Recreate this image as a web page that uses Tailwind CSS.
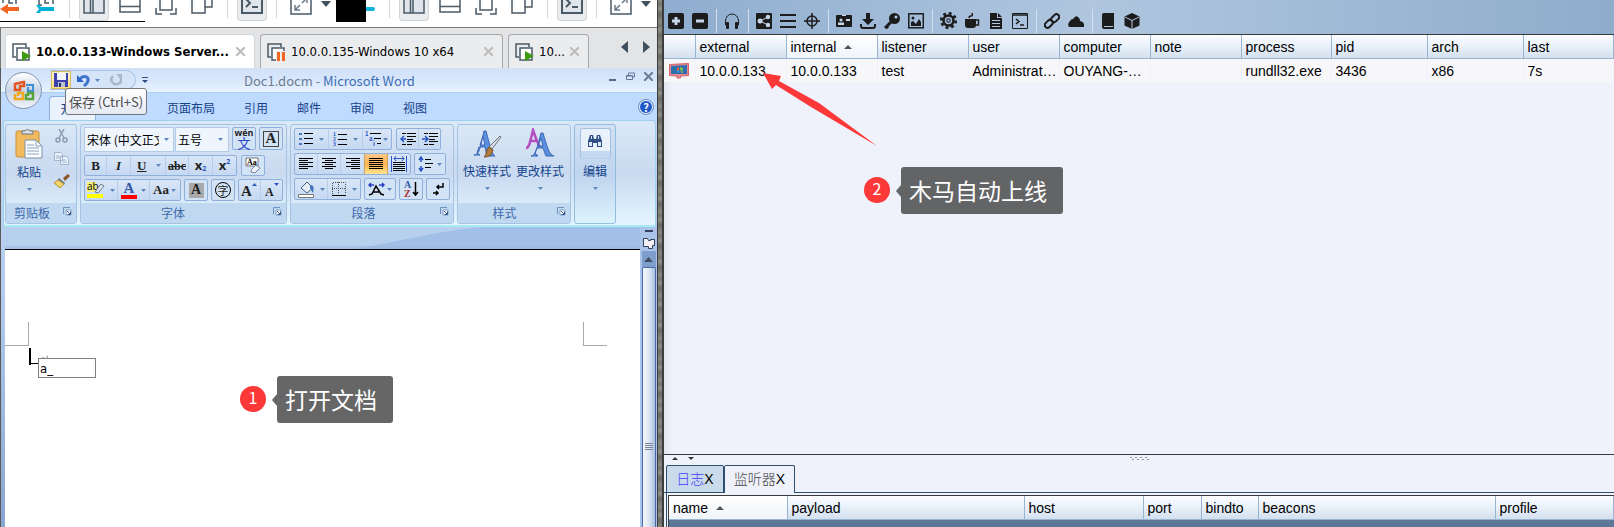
<!DOCTYPE html>
<html lang="zh-CN">
<head>
<meta charset="utf-8">
<title>Doc1.docm</title>
<script src="https://cdn.jsdelivr.net/npm/@tailwindcss/browser@4"></script>
</head>
<body class="relative flex h-screen overflow-hidden bg-[#eff2fb] font-['Liberation_Sans','Noto_Sans_CJK_SC',sans-serif] text-black">

<svg class="hidden">
  <symbol id="down" viewBox="0 0 5 3"><path d="M0 0h5L2.5 3z" fill="#5f86bd"/></symbol>
  <symbol id="sidebar" viewBox="0 0 22 22"><path d="M1 1h20v20H1zM7.500 1v20M10 1v20" fill="#dfe5ea" stroke="#4a5a67" stroke-width="1.500"/></symbol>
  <symbol id="bottom" viewBox="0 0 22 22"><path d="M1 1h20v18H1zM1 13.500h20" fill="none" stroke="#4a5a67" stroke-width="1.500"/></symbol>
  <symbol id="fit" viewBox="0 0 22 22"><path d="M5 1h12v16H5zM1 15v6h6M21 15v6h-6" fill="none" stroke="#4a5a67" stroke-width="1.500"/></symbol>
  <symbol id="copy" viewBox="0 0 22 22"><path d="M1 6h13v14H1zM8 6V1h13v13h-7" fill="none" stroke="#4a5a67" stroke-width="1.500"/></symbol>
  <symbol id="term" viewBox="0 0 22 22"><path d="M1 1h20v20H1z" fill="#dfe5ea" stroke="#4a5a67" stroke-width="2"/><path d="M5 7l4 4-4 4M11 15h6" fill="none" stroke="#4a5a67" stroke-width="2"/></symbol>
  <symbol id="expand" viewBox="0 0 22 22"><path d="M1 1h20v20H1z" fill="#fff" stroke="#4a5a67" stroke-width="1.500"/><path d="M5 12v5h5M5 17l5-5M17 10V5h-5M17 5l-5 5" fill="none" stroke="#6b7a86" stroke-width="1.500"/></symbol>
  <symbol id="vm" viewBox="0 0 18 18"><path d="M4 14H1V1h13v3" fill="none" stroke="#4a5a67" stroke-width="1.500"/><path d="M5 5h12v12H5z" fill="#fff" stroke="#4a5a67" stroke-width="1.500"/></symbol>
  <symbol id="launch" viewBox="0 0 9 9"><path d="M.5 7V.5H7" fill="none" stroke="#6d91c0"/><path d="M3 3h5v5H3z" fill="#fff" stroke="#7f9fc9"/><path d="M4 4l3 3M7.500 4.500v3h-3" stroke="#35588c" fill="none"/></symbol>
</svg>

<!-- Virtual machine window -->
<section class="relative flex min-w-0 flex-[657_1_0%] flex-col">
  <div class="relative flex h-[27px] shrink-0 items-start overflow-hidden bg-white">
    <div class="flex h-[22px] w-[69px] shrink-0 items-start justify-between border-b border-black pr-[13px]">
      <svg width="20" height="15" viewBox="0 0 20 15" fill="none"><path d="M3 0v3M16 0v4M9 0v3h4" stroke="#4a5a67" stroke-width="1.500"/><path d="M19 9H6" stroke="#f26522" stroke-width="4"/><path d="M8 4v10L0 9z" fill="#f26522"/></svg>
      <svg width="20" height="15" viewBox="0 0 20 15" fill="none"><path d="M3 0v5h3M17 0v4M9 0v3h4" stroke="#4a5a67" stroke-width="1.500"/><path d="M4 9h14" stroke="#00b0d8" stroke-width="4"/><path d="M0 5h4l2 4-2 4H0l3-4z" fill="#00b0d8"/></svg>
    </div>
    <div class="flex h-[22px] w-[267px] shrink-0 items-start">
      <div class="flex h-[22px] w-[76px] border-b border-black">
        <i class="h-[18px] w-px bg-gray-300"></i>
        <button aria-label="侧栏" class="ml-[9px] flex h-[21px] w-[30px] items-end justify-center rounded-b border border-t-0 border-gray-300 bg-[#e9ebed] pb-[6px]"><svg width="22" height="22" class="shrink-0"><use href="#sidebar"/></svg></button>
      </div>
      <div class="-ml-[33px] flex h-[15px] items-end">
        <button aria-label="缩略图栏" class="flex w-9 justify-center"><svg width="22" height="22"><use href="#bottom"/></svg></button>
        <button aria-label="全屏" class="flex w-9 justify-center"><svg width="22" height="22"><use href="#fit"/></svg></button>
        <button aria-label="Unity" class="flex w-9 justify-center"><svg width="22" height="22"><use href="#copy"/></svg></button>
      </div>
      <i class="ml-[7px] h-[18px] w-px bg-gray-300"></i>
      <button aria-label="控制台" class="ml-[9px] flex h-[21px] w-[30px] items-end justify-center rounded-b border border-t-0 border-gray-300 bg-[#e9ebed] pb-[6px]"><svg width="22" height="22" class="shrink-0"><use href="#term"/></svg></button>
      <i class="ml-[9px] h-[18px] w-px bg-gray-300"></i>
      <button aria-label="拉伸" class="ml-[13px] flex h-[15px] items-end"><svg width="22" height="22"><use href="#expand"/></svg></button>
      <svg class="mt-[1px] ml-[9px]" width="10" height="6"><path d="M0 0h10L5 6z" fill="#3f4f5c"/></svg>
    </div>
    <i class="h-[22px] w-[30px] shrink-0 bg-black"></i>
    <i class="mt-[7px] h-1 w-[9px] shrink-0 rounded-r bg-[#12b3dc]"></i>
    <div class="ml-[14px] flex h-[22px] w-[267px] shrink-0 items-start">
      <i class="h-[18px] w-px bg-gray-300"></i>
      <button aria-label="侧栏" class="ml-[9px] flex h-[21px] w-[30px] items-end justify-center rounded-b border border-t-0 border-gray-300 bg-[#e9ebed] pb-[6px]"><svg width="22" height="22" class="shrink-0"><use href="#sidebar"/></svg></button>
      <div class="ml-[3px] flex h-[15px] items-end">
        <button aria-label="缩略图栏" class="flex w-9 justify-center"><svg width="22" height="22"><use href="#bottom"/></svg></button>
        <button aria-label="全屏" class="flex w-9 justify-center"><svg width="22" height="22"><use href="#fit"/></svg></button>
        <button aria-label="Unity" class="flex w-9 justify-center"><svg width="22" height="22"><use href="#copy"/></svg></button>
      </div>
      <i class="ml-[7px] h-[18px] w-px bg-gray-300"></i>
      <button aria-label="控制台" class="ml-[9px] flex h-[21px] w-[30px] items-end justify-center rounded-b border border-t-0 border-gray-300 bg-[#e9ebed] pb-[6px]"><svg width="22" height="22" class="shrink-0"><use href="#term"/></svg></button>
      <i class="ml-[9px] h-[18px] w-px bg-gray-300"></i>
      <button aria-label="拉伸" class="ml-[13px] flex h-[15px] items-end"><svg width="22" height="22"><use href="#expand"/></svg></button>
      <svg class="mt-[1px] ml-[9px]" width="10" height="6"><path d="M0 0h10L5 6z" fill="#3f4f5c"/></svg>
    </div>
  </div>

  <nav class="flex h-[41px] shrink-0 items-end gap-[5px] border-t border-l border-[#7b7b7b] bg-[#e3e4e6] pl-1 font-['DejaVu_Sans_Condensed','DejaVu_Sans',sans-serif] text-[13px]">
    <div class="flex h-[34px] w-[250px] items-center rounded-t border border-b-0 border-gray-300 bg-white pl-[6px]">
      <svg width="19" height="18" viewBox="0 0 19 18"><use href="#vm" width="18" height="18"/><path d="M10 8l9 5-9 5z" fill="#3f9c12"/></svg>
      <a href="#" class="ml-[5px] flex-1 font-bold whitespace-nowrap">10.0.0.133-Windows Server...</a>
      <button aria-label="关闭" class="mr-[9px]"><svg width="9" height="9"><path d="M0 0l9 9M9 0L0 9" stroke="#bbb" stroke-width="2"/></svg></button>
    </div>
    <div class="flex h-[34px] w-[243px] items-center rounded-t border border-b-0 border-[#a8a8a8] bg-[#ebecee] pl-[6px]">
      <svg width="19" height="18" viewBox="0 0 19 18"><use href="#vm" width="18" height="18"/><path d="M9 8h10v10H9z" fill="#ebecee"/><path d="M10 9h3v9h-3zM15 9h3v9h-3z" fill="#f26522"/></svg>
      <a href="#" class="ml-[5px] flex-1 whitespace-nowrap">10.0.0.135-Windows 10 x64</a>
      <button aria-label="关闭" class="mr-[9px]"><svg width="9" height="9"><path d="M0 0l9 9M9 0L0 9" stroke="#bbb" stroke-width="2"/></svg></button>
    </div>
    <div class="flex h-[34px] w-[81px] items-center rounded-t border border-b-0 border-[#a8a8a8] bg-[#ebecee] pl-[6px]">
      <svg width="19" height="18" viewBox="0 0 19 18"><use href="#vm" width="18" height="18"/><path d="M10 8l9 5-9 5z" fill="#3f9c12"/></svg>
      <a href="#" class="ml-[5px] flex-1 whitespace-nowrap">10...</a>
      <button aria-label="关闭" class="mr-[9px]"><svg width="9" height="9"><path d="M0 0l9 9M9 0L0 9" stroke="#bbb" stroke-width="2"/></svg></button>
    </div>
    <div class="ml-auto flex h-[34px] items-start gap-[15px] pt-[7px] pr-[7px]">
      <button aria-label="向左"><svg width="7" height="12"><path d="M7 0v12L0 6z" fill="#3f4f5c"/></svg></button>
      <button aria-label="向右"><svg width="7" height="12"><path d="M0 0v12l7-6z" fill="#3f4f5c"/></svg></button>
    </div>
  </nav>

  <!-- Word -->
  <div class="relative flex min-h-0 flex-1 flex-col border-l border-[#5a5a5a] bg-linear-to-b from-[#c9dcf5] via-[#b3ccec] to-[#86a5d1] font-['Noto_Sans_CJK_SC',sans-serif] text-xs">
    <header class="flex h-[25px] shrink-0 items-center border-b border-[#a9d0f5] bg-linear-to-b from-[#cfe0f8] via-[#d8e7fb] to-[#e8f2ff] pl-[49px]">
      <div class="flex h-[20px] w-[86px] items-center rounded-r-full border border-l-0 border-[#a9c3e6] bg-[#d5e4f8] pl-px">
        <button aria-label="保存" class="flex h-[18px] w-[20px] items-center justify-center border border-[#d9b760] bg-linear-to-b from-[#fff6cf] to-[#ffe07a]"><svg width="14" height="14"><path d="M0 0h14v14H0z" fill="#3c3fae"/><path d="M3 0h9v7H3z" fill="#eef3fc"/><path d="M4 9h7v5H4z" fill="#b9c1cd"/><path d="M5 10h2v4H5z" fill="#28306b"/></svg></button>
        <button aria-label="撤消" class="ml-[6px]"><svg width="13" height="13" fill="none"><path d="M0 1v7h7z" fill="#2f66c4"/><path d="M3 5c3-4 9-3 8 2-1 3-3 4-4 5" stroke="#3f74cd" stroke-width="3"/></svg></button>
        <svg class="ml-[5px]" width="5" height="3"><use href="#down"/></svg>
        <button aria-label="恢复" class="ml-[10px]"><svg width="12" height="12" fill="none"><path d="M3 2c-4 4 0 9 4 8 4 0 6-5 2-8" stroke="#a9b8cd" stroke-width="2.500"/><path d="M6 0h6v5z" fill="#a9b8cd"/></svg></button>
      </div>
      <button aria-label="自定义" class="ml-[6px]"><svg width="6" height="6"><path d="M0 0h6v1H0zM0 3h6L3 6z" fill="#2d4e86"/></svg></button>
      <h1 class="flex-1 pt-[2px] pl-[96px] text-[13px] whitespace-nowrap text-[#3e6fb4]"><span class="text-[#6d7c92]">Doc1.docm - </span>Microsoft Word</h1>
      <div class="flex gap-[9px] self-start pt-[4px] pr-1">
        <button aria-label="最小化"><svg width="9" height="9"><path d="M1 7h7v2H1z" fill="#5a6a82"/></svg></button>
        <button aria-label="还原"><svg width="9" height="9" fill="none"><path d="M2.500 3V1h6v4H7" stroke="#62779b"/><path d="M.5 3.500h6v4h-6zM0 4h7" stroke="#62779b"/></svg></button>
        <button aria-label="关闭"><svg width="9" height="9"><path d="M0 0l9 9M9 0L0 9" stroke="#6b7c97" stroke-width="2"/></svg></button>
      </div>
    </header>

    <nav class="flex h-[27px] shrink-0 items-end bg-[#bfdbff] pl-12 text-[#15428b]">
      <a href="#" class="flex h-6 w-[47px] items-center justify-center rounded-t border border-b-0 border-[#8db2e3] bg-[#e9f2fd]">开始</a>
      <div class="ml-[18px] flex h-6 flex-1 items-center gap-[29px]">
        <a href="#">插入</a><a href="#">页面布局</a><a href="#">引用</a><a href="#">邮件</a><a href="#">审阅</a><a href="#">视图</a>
      </div>
      <button aria-label="帮助" class="mr-1 mb-[6px] flex size-[14px] items-center justify-center rounded-full border border-white bg-[#2059c8] text-[11px] font-bold text-white outline outline-[#6a8cc4]">?</button>
    </nav>

    <div class="mr-px ml-[2px] flex h-[107px] shrink-0 gap-[3px] rounded-[3px] border border-b-2 border-[#9fd0ee] border-b-[#a8eaf4] bg-linear-to-b from-[#dbe8f7] via-[#c9daf0] to-[#e4f5ff] px-px pt-[3px] pb-px text-[#15428b]">
      <!-- Clipboard -->
      <section class="flex w-[72px] flex-col rounded-[3px] border border-[#a5c3e3]">
        <div class="flex flex-1 pt-[3px] pl-[10px]">
          <button class="flex w-[26px] flex-col items-center">
            <svg width="28" height="31" viewBox="0 0 28 31"><rect x="1" y="3" width="23" height="26" rx="2" fill="#f0bb5e" stroke="#c98f2e"/><path d="M7 5V3h3a3 3 0 015 0h3v3H7z" fill="#dde1e6" stroke="#6b7684"/><path d="M10 12h11l6 6v12H10z" fill="#fbfdff" stroke="#7d90ab"/><path d="M21 12v6h6M12 17h7M12 20h12M12 23h12M12 26h12" stroke="#8ba3c4" fill="none"/></svg>
            <span class="mt-1 leading-[18px] whitespace-nowrap">粘贴</span>
            <svg class="mt-[7px]" width="5" height="3"><use href="#down"/></svg>
          </button>
          <div class="ml-[12px] flex flex-col gap-[9px] pt-px">
            <button aria-label="剪切"><svg width="16" height="14" fill="none" stroke="#8b9bb3" stroke-width="1.500"><path d="M5 0l5 9M10 0L5 9"/><circle cx="4" cy="11" r="2"/><circle cx="11" cy="11" r="2"/></svg></button>
            <button aria-label="复制"><svg width="16" height="13" fill="#edf3fb" stroke="#a0b2cc"><path d="M.5.5h6l2 2v6h-8zM6.500 4.500h6l2 2v6h-8z"/><path d="M2 4h4M2 6h4M8 8h4M8 10h5"/></svg></button>
            <button aria-label="格式刷"><svg width="16" height="14"><path d="M9 4l5-4 2 2-5 5z" fill="#8a5a2b"/><path d="M5 4l6 5-1 2-7-4z" fill="#6f7785"/><path d="M4 6l6 4-4 4-6-5z" fill="#f2d46a" stroke="#b3913a"/></svg></button>
          </div>
        </div>
        <footer class="flex h-5 items-center bg-[#c1d8f1] pl-[8px] text-[#3e6aaa]"><span class="flex-1">剪贴板</span><button aria-label="剪贴板选项" class="mr-1 mb-1"><svg width="9" height="9"><use href="#launch"/></svg></button></footer>
      </section>

      <!-- Font -->
      <section class="flex w-[207px] flex-col rounded-[3px] border border-[#a5c3e3]">
        <div class="flex flex-1 flex-col gap-[3px] px-[3px] pt-[2px] font-['Liberation_Serif',serif] text-[#222]">
          <div class="flex h-[25px] gap-[2px]">
            <label class="relative flex w-[90px] items-center border border-[#b3cae8] bg-[#eef5fd]"><select aria-label="字体" class="w-[74px] appearance-none overflow-hidden pl-[2px] font-['Noto_Sans_CJK_SC',sans-serif] text-xs text-black"><option>宋体 (中文正文)</option></select><svg class="ml-[5px]" width="5" height="3"><use href="#down"/></svg></label>
            <label class="-ml-px flex w-[54px] items-center border border-[#b3cae8] bg-[#eef5fd]"><select aria-label="字号" class="w-[41px] appearance-none pl-[2px] font-['Noto_Sans_CJK_SC',sans-serif] text-xs text-black"><option>五号</option></select><svg class="ml-px" width="5" height="3"><use href="#down"/></svg></label>
            <button aria-label="拼音指南" class="ml-px flex h-[23px] w-6 flex-col items-center justify-center rounded-[2px] border border-[#8fb0dc] bg-[#d3e3f6] font-['Noto_Sans_CJK_SC',sans-serif]"><span class="font-['Open_Sans',sans-serif] text-[9px] leading-[8px] font-bold">wén</span><span class="text-[13px] leading-[12px] text-[#2b45c2]">文</span></button>
            <button aria-label="字符边框" class="ml-px flex h-[23px] w-6 items-center justify-center rounded-[2px] border border-[#8fb0dc] bg-[#d3e3f6]"><span class="flex size-4 items-center justify-center border border-[#444] text-[15px] font-bold">A</span></button>
          </div>
          <div class="flex h-[21px] gap-1">
            <div class="flex w-[153px] rounded-[2px] border border-[#8fb0dc] bg-linear-to-b from-[#d9e6f7] to-[#c5d9f2] text-[13px] font-bold">
              <button class="w-[22px] border-r border-[#b7cdea]">B</button>
              <button class="w-6 border-r border-[#b7cdea] italic">I</button>
              <button class="flex w-[35px] items-center justify-between border-r border-[#b7cdea] pr-1 pl-[6px]"><span class="underline">U</span><svg width="5" height="3"><use href="#down"/></svg></button>
              <button class="w-[23px] border-r border-[#b7cdea] text-xs line-through">abc</button>
              <button class="flex w-6 items-center justify-center border-r border-[#b7cdea] font-['Open_Sans',sans-serif]">x<span class="pt-[6px] text-[7px] text-[#2b55c2]">2</span></button>
              <button class="flex w-[23px] items-center justify-center font-['Open_Sans',sans-serif]">x<span class="pb-[8px] text-[7px] text-[#2b55c2]">2</span></button>
            </div>
            <button aria-label="清除格式" class="flex w-6 items-center justify-center rounded-[2px] border border-[#8fb0dc] bg-[#d3e3f6]"><svg width="17" height="17"><path d="M1 1h12v8H1z" fill="#fff" stroke="#777"/><text x="2" y="8" font-size="8" font-weight="bold">Aa</text><path d="M6 13l5-5 4 3-5 5-4-1z" fill="#eef1f7" stroke="#7685a0"/></svg></button>
          </div>
          <div class="flex h-[22px] gap-[3px]">
            <div class="flex w-[97px] rounded-[2px] border border-[#8fb0dc] bg-linear-to-b from-[#d9e6f7] to-[#c5d9f2]">
              <button aria-label="突出显示" class="flex w-[33px] items-center gap-[5px] border-r border-[#b7cdea] pl-[2px]"><svg width="18" height="18"><path d="M0 1h9v10H0z" fill="#f5f07a"/><text x="0" y="9" font-size="10" font-family="Open Sans">ab</text><path d="M8 11l6-8 3 2-6 7z" fill="#dfe6ef" stroke="#6b7890"/><path d="M0 13h16v4H0z" fill="#ff0"/></svg><svg width="5" height="3"><use href="#down"/></svg></button>
              <button aria-label="字体颜色" class="flex w-8 items-center gap-1 border-r border-[#b7cdea] pl-[3px]"><span class="flex h-[18px] w-4 items-start justify-center border-b-4 border-[red] text-[15px] leading-[14px] font-bold text-[#3558a8]">A</span><svg width="5" height="3"><use href="#down"/></svg></button>
              <button class="flex items-center gap-[2px] pl-[3px] text-[13px] font-bold">Aa<svg width="5" height="3"><use href="#down"/></svg></button>
            </div>
            <button aria-label="字符底纹" class="flex w-6 items-center justify-center rounded-[2px] border border-[#8fb0dc] bg-[#d3e3f6]"><span class="flex size-[15px] items-center justify-center bg-[#a9a9a9] text-[14px] font-bold">A</span></button>
            <button aria-label="带圈字符" class="flex w-6 items-center justify-center rounded-[2px] border border-[#8fb0dc] bg-[#d3e3f6]"><span class="flex size-4 items-center justify-center rounded-full border border-black font-['Noto_Sans_CJK_SC',sans-serif] text-[11px] leading-3">字</span></button>
            <div class="flex w-[45px] rounded-[2px] border border-[#8fb0dc] bg-linear-to-b from-[#d9e6f7] to-[#c5d9f2] font-bold">
              <button aria-label="增大字体" class="flex w-[22px] border-r border-[#b7cdea] pt-[3px] pl-[2px] text-[15px] leading-[17px]">A<svg width="5" height="3" viewBox="0 0 5 3"><path d="M0 3h5L2.500 0z" fill="#2b55c2"/></svg></button>
              <button aria-label="缩小字体" class="flex pt-[3px] pl-1 text-[12px] leading-[19px]">A<svg width="5" height="3" viewBox="0 0 5 3"><path d="M0 0h5L2.500 3z" fill="#2b55c2"/></svg></button>
            </div>
          </div>
        </div>
        <footer class="flex h-5 items-center bg-[#c1d8f1] text-[#3e6aaa]"><span class="flex-1 pr-2 text-center">字体</span><button aria-label="字体选项" class="mr-1 mb-1"><svg width="9" height="9"><use href="#launch"/></svg></button></footer>
      </section>

      <!-- Paragraph -->
      <section class="flex w-[164px] flex-col rounded-[3px] border border-[#a5c3e3]">
        <div class="flex flex-1 flex-col gap-[3px] px-[3px] pt-[3px]">
          <div class="flex h-[22px] gap-1">
            <div class="flex w-[98px] rounded-[2px] border border-[#8fb0dc] bg-linear-to-b from-[#d9e6f7] to-[#c5d9f2]">
              <button aria-label="项目符号" class="flex w-[34px] items-center gap-[6px] border-r border-[#b7cdea] pl-1"><svg width="14" height="14"><path d="M0 1h3v2H0zM0 6h3v2H0zM0 11h3v2H0z" fill="#4a74bd"/><path d="M5 1.500h9M5 6.500h9M5 11.500h9" stroke="#000"/></svg><svg width="5" height="3"><use href="#down"/></svg></button>
              <button aria-label="编号" class="flex w-[34px] items-center gap-[6px] border-r border-[#b7cdea] pl-1"><svg width="14" height="15"><g font-size="5" font-weight="bold" fill="#2b55c2"><text y="4">1</text><text y="9">2</text><text y="14">3</text></g><path d="M5 2.500h9M5 7.500h9M5 12.500h9" stroke="#000"/></svg><svg width="5" height="3"><use href="#down"/></svg></button>
              <button aria-label="多级列表" class="flex items-center gap-px pl-[2px]"><svg width="17" height="16"><g font-size="6" font-weight="bold" fill="#2b55c2"><text y="5">1</text><text x="4" y="10">a</text><text x="8" y="15">i</text></g><path d="M5 2.500h11M9 7.500h7M12 12.500h4" stroke="#000"/></svg><svg width="5" height="3"><use href="#down"/></svg></button>
            </div>
            <div class="flex w-[45px] rounded-[2px] border border-[#8fb0dc] bg-linear-to-b from-[#d9e6f7] to-[#c5d9f2]">
              <button aria-label="减少缩进" class="flex w-[22px] items-center justify-center border-r border-[#b7cdea]"><svg width="16" height="14"><path d="M2 1.500h4M2 12.500h4M7 1.500h9M7 4.500h9M7 7.500h6M7 9.500h9M7 12.500h5" stroke="#000"/><path d="M6 7H1M4 4L1 7l3 3" stroke="#2b55c2" fill="none" stroke-width="1.500"/></svg></button>
              <button aria-label="增加缩进" class="flex flex-1 items-center justify-center"><svg width="16" height="14"><path d="M2 1.500h4M2 12.500h4M7 1.500h9M7 4.500h9M7 7.500h6M7 9.500h9M7 12.500h5" stroke="#000"/><path d="M0 7h5M3 4l3 3-3 3" stroke="#2b55c2" fill="none" stroke-width="1.500"/></svg></button>
            </div>
          </div>
          <div class="flex h-[22px] gap-[3px]">
            <div class="flex w-[117px] rounded-[2px] border border-[#8fb0dc] bg-linear-to-b from-[#d9e6f7] to-[#c5d9f2]">
              <button aria-label="左对齐" class="flex flex-1 items-center justify-center border-r border-[#b7cdea]"><svg width="14" height="12"><path d="M0 .5h14M0 2.500h9M0 4.500h14M0 6.500h9M0 8.500h14M0 10.500h9" stroke="#000"/></svg></button>
              <button aria-label="居中" class="flex flex-1 items-center justify-center border-r border-[#b7cdea]"><svg width="14" height="12"><path d="M0 .5h14M3 2.500h8M0 4.500h14M3 6.500h8M0 8.500h14M3 10.500h8" stroke="#000"/></svg></button>
              <button aria-label="右对齐" class="flex flex-1 items-center justify-center"><svg width="14" height="12"><path d="M0 .5h14M5 2.500h9M0 4.500h14M5 6.500h9M0 8.500h14M5 10.500h9" stroke="#000"/></svg></button>
              <button aria-label="两端对齐" class="flex flex-1 items-center justify-center border-x border-[#c9a15c] bg-linear-to-b from-[#ffc88a] via-[#ffb24d] to-[#ffe58c]"><svg width="14" height="12"><path d="M0 .5h14M0 2.500h14M0 4.500h14M0 6.500h14M0 8.500h14M0 10.500h14" stroke="#000"/></svg></button>
              <button aria-label="分散对齐" class="flex flex-1 items-center justify-center"><svg width="16" height="16"><path d="M.5 0v16M15.500 0v16M3 2.500h10M5 0L3 2.500 5 5M11 0l2 2.500L11 5" stroke="#2b55c2" fill="none"/><path d="M2 6.500h12M2 8.500h12M2 10.500h12M2 12.500h12M2 14.500h12" stroke="#000"/></svg></button>
            </div>
            <button aria-label="行距" class="flex w-8 items-center gap-[3px] rounded-[2px] border border-[#8fb0dc] bg-[#d3e3f6] pl-[3px]"><svg width="16" height="16"><path d="M3 1v5M3 10v5M1 4l2-3 2 3M1 12l2 3 2-3" stroke="#2b55c2" fill="none" stroke-width="1.500"/><path d="M7 3.500h6M7 7.500h8M7 11.500h6" stroke="#000"/></svg><svg width="5" height="3"><use href="#down"/></svg></button>
          </div>
          <div class="flex h-[22px] gap-[3px]">
            <div class="flex w-[67px] rounded-[2px] border border-[#8fb0dc] bg-linear-to-b from-[#d9e6f7] to-[#c5d9f2]">
              <button aria-label="底纹" class="flex w-[33px] items-center gap-[5px] border-r border-[#b7cdea] pl-[3px]"><svg width="17" height="17"><path d="M3 7l6-6 6 6-6 5z" fill="#e5edf8" stroke="#4b5f80"/><path d="M12 4c4 0 4 3 3 8l-3-5z" fill="#3d6fbe"/><path d="M.5 13.500h15v3H.5z" fill="#fff" stroke="#777"/></svg><svg width="5" height="3"><use href="#down"/></svg></button>
              <button aria-label="边框" class="flex flex-1 items-center gap-[6px] pl-1"><svg width="14" height="14" fill="none"><path d="M.5 12V.5h13V12M6.500 0v12M0 6.500h14" stroke="#555" stroke-dasharray="1 1"/><path d="M0 13.500h14" stroke="#000"/></svg><svg width="5" height="3"><use href="#down"/></svg></button>
            </div>
            <button aria-label="中文版式" class="flex w-8 items-center gap-[2px] rounded-[2px] border border-[#8fb0dc] bg-[#d3e3f6] pl-[3px]"><svg width="17" height="15" fill="none"><path d="M1 13l3-1 4-8 5 8 3 1M5 10h6" stroke="#000" stroke-width="1.500"/><path d="M1 3h5M3 1L1 3l2 2M16 3h-5M14 1l2 2-2 2" stroke="#2b3fc2" stroke-width="1.500"/></svg><svg width="5" height="3"><use href="#down"/></svg></button>
            <button aria-label="排序" class="flex w-6 items-center justify-center rounded-[2px] border border-[#8fb0dc] bg-[#d3e3f6]"><svg width="17" height="18" class="font-['Liberation_Serif',serif]"><g font-size="10" font-weight="bold"><text x="1" y="8" fill="#3558a8">A</text><text x="1" y="17" fill="#a33">Z</text></g><path d="M12.500 2v13M10 12l2.500 3 2.500-3" stroke="#000" fill="none" stroke-width="1.500"/></svg></button>
            <button aria-label="显示标记" class="flex w-6 items-center justify-center rounded-[2px] border border-[#8fb0dc] bg-[#d3e3f6]"><svg width="12" height="14"><path d="M11 1v4H5M7 3L5 5l2 2M1 11h5M4 9l2 2-2 2" stroke="#000" fill="none" stroke-width="1.500"/></svg></button>
          </div>
        </div>
        <footer class="flex h-5 items-center bg-[#c1d8f1] text-[#3e6aaa]"><span class="flex-1 pr-1 text-center">段落</span><button aria-label="段落选项" class="mr-1 mb-1"><svg width="9" height="9"><use href="#launch"/></svg></button></footer>
      </section>

      <!-- Styles -->
      <section class="flex w-[114px] flex-col rounded-[3px] border border-[#a5c3e3]">
        <div class="flex flex-1 gap-[5px] pt-[3px] pl-[5px]">
          <button class="flex w-12 flex-col items-center"><svg width="32" height="31" viewBox="0 0 32 31"><path d="M3 27c5 0 6-6 10-24h2c4 15 6 24 9 25h-8l-2-9H8l-2 6 3 2zM9 17h5l-2-9z" fill="#5a90dd" stroke="#3b66b5"/><path d="M30 9l-9 12-3-2L29 8z" fill="#d9dde3" stroke="#70757e"/><path d="M18 19l4 3c-1 5-4 7-9 7 3-2 2-8 5-10z" fill="#b07c3d" stroke="#7b5322"/></svg><span class="mt-[3px] leading-[18px] whitespace-nowrap">快速样式</span><svg class="mt-[7px]" width="5" height="3"><use href="#down"/></svg></button>
          <button class="flex w-12 flex-col items-center"><svg width="32" height="31" viewBox="0 0 32 31"><path d="M2 20c3 0 4-5 7-18 3 9 5 14 7 17M5 13h8" fill="none" stroke="#b44fc0" stroke-width="2.500"/><path d="M7 28c4 0 6-7 10-23h2c4 13 6 22 11 23h-8l-3-8h-6l-2 5 3 3zM14 18h5l-2-8z" fill="#5a90dd" stroke="#3b66b5"/></svg><span class="mt-[3px] leading-[18px] whitespace-nowrap">更改样式</span><svg class="mt-[7px]" width="5" height="3"><use href="#down"/></svg></button>
        </div>
        <footer class="flex h-5 items-center bg-[#c1d8f1] text-[#3e6aaa]"><span class="flex-1 pr-[6px] text-center">样式</span><button aria-label="样式选项" class="mr-1 mb-1"><svg width="9" height="9"><use href="#launch"/></svg></button></footer>
      </section>

      <!-- Editing -->
      <section class="flex w-[42px] flex-col items-center rounded-[3px] border border-[#93bddd] bg-linear-to-b from-[#d3e2f5] via-[#bfd4ee] to-[#dcf3fd] pt-[3px]">
        <button class="flex flex-col items-center">
          <span class="flex h-[31px] w-[31px] justify-center rounded-[3px] border border-[#a5c0e0] border-b-[#b8cfea] bg-linear-to-b from-[#e9f1fb] from-75% to-[#c3d8f1] to-75% pt-[4px]"><svg width="16" height="15"><path d="M1 14V8l2-6h3l1 4h2l1-4h3l2 6v6h-5v-4H6v4z" fill="#2f4f86"/><path d="M2 9h3v4H2zM11 9h3v4h-3zM4 3h1v3H4zM11 3h1v3h-1z" fill="#dce8f6"/></svg></span>
          <span class="mt-[3px] leading-[18px]">编辑</span>
          <svg class="mt-[7px]" width="5" height="3"><use href="#down"/></svg>
        </button>
      </section>
    </div>

    <div class="flex min-h-0 flex-1">
      <div class="flex min-w-0 flex-1 flex-col pl-1">
        <svg class="block h-[22px] w-full shrink-0" viewBox="0 0 636 22" preserveAspectRatio="none"><path d="M0 0h636v22H0z" fill="#b6d0ee"/><path d="M350 22C400 14 430 4 480 0h156v22z" fill="#a2bfe7"/><path d="M0 19h636v3H0z" fill="#9db9dd" opacity=".6"/></svg>
        <main class="relative flex-1 border-t border-black bg-white">
          <div class="flex justify-between pt-[72px] pr-[33px]">
            <i class="size-6 border-r border-b border-[#a9a9a9]"></i>
            <i class="size-6 border-b border-l border-[#a9a9a9]"></i>
          </div>
          <i class="absolute top-[98px] left-6 h-[17px] w-[2px] bg-black"></i>
          <i class="absolute top-[113px] left-6 h-px w-[9px] bg-black"></i>
          <span class="absolute top-[102px] left-9 text-[10px] leading-3 text-[#777]">↵</span>
          <input aria-label="输入法" value="a_" class="absolute top-[108px] left-[33px] h-5 w-[58px] border border-[#808080] bg-white pl-px font-['DejaVu_Sans_Condensed','DejaVu_Sans',sans-serif] text-[13px] text-black">
        </main>
      </div>
      <aside class="flex w-[17px] flex-col items-center bg-[#a9c4e8]">
        <svg class="mt-[2px] shrink-0" width="14" height="22"><path d="M3 1h8v2H3z" fill="#37435c"/><path d="M1.500 9.500h4l1 2h2v-1h4v6h-2v3h-4v-2h-5z" fill="#f4eef5" stroke="#33405a"/></svg>
        <button aria-label="向上滚动" class="flex h-4 w-[14px] shrink-0 items-center justify-center bg-[#7e9fcc]"><svg width="9" height="5"><path d="M0 5h9L4.500 0z" fill="#434e66"/></svg></button>
        <div class="flex w-[14px] flex-1 flex-col items-center rounded-t-[2px] border border-b-0 border-[#4a6aa5] bg-linear-to-r from-[#f3f7fc] via-[#dfe7f2] to-[#a9bfdd] pt-[175px]"><svg width="8" height="8"><path d="M0 .5h8M0 2.500h8M0 4.500h8M0 6.500h8" stroke="#7c879b"/></svg></div>
      </aside>
    </div>

    <button class="absolute top-[4px] left-1 flex size-[37px] items-center justify-center rounded-full border border-[#8396b2] bg-linear-to-b from-white via-[#c9d4e4] to-[#eef3fa]" aria-label="Office 按钮">
      <svg width="24" height="24" viewBox="0 0 24 24" fill="none"><path d="M11 3L3 5v6h5V7h4V3z" stroke="#e2571f" stroke-width="2.500"/><path d="M14 6h7v6h-5V8" stroke="#3c8fd6" stroke-width="2"/><path d="M3 15v5h8v-6H6v3" stroke="#f0a81e" stroke-width="2.500"/><path d="M14 15v5h7v-6h-5v3" stroke="#58a33a" stroke-width="2.500"/></svg>
    </button>
    <div role="tooltip" class="absolute top-[20px] left-[64px] flex h-[27px] w-[82px] items-center justify-center rounded-[3px] border border-[#767676] bg-linear-to-b from-white to-[#e4e9f3] font-['Noto_Sans_CJK_SC',sans-serif] text-[13px] whitespace-nowrap text-[#4c4c4c]">保存 (Ctrl+S)</div>
  </div>
</section>

<!-- Desktop wallpaper between the two windows -->
<div class="w-[7px] shrink-0 border-x border-r-2 border-[#3d3d3d] bg-[repeating-linear-gradient(175deg,#8b8982_0px,#75736e_5px,#918f88_9px,#6b6965_14px,#84827c_21px)]"></div>

<!-- Team server client -->
<section class="relative flex min-w-0 flex-[950_1_0%] flex-col">
  <div class="flex h-[34px] shrink-0 flex-col bg-linear-to-r from-[#8fadcf] via-[#b0c6df] via-45% to-[#8eaccc]">
    <nav class="flex h-[3px] items-end gap-[13px] overflow-hidden pl-[92px] text-[13px] leading-[21px] font-['Noto_Sans_CJK_SC',sans-serif]"><a href="#">视图</a><a href="#">攻击</a><a href="#">报告</a><a href="#">帮助</a></nav>
    <div class="flex h-[31px] items-center pt-1">
      <button aria-label="添加" class="flex w-6 justify-center"><svg width="16" height="16"><rect width="16" height="16" rx="2" fill="#1c1c1c"/><path d="M8 4v8M4 8h8" stroke="#c5d6ea" stroke-width="3"/></svg></button>
      <button aria-label="移除" class="flex w-6 justify-center"><svg width="16" height="16"><rect width="16" height="16" rx="2" fill="#1c1c1c"/><path d="M4 8h8" stroke="#c5d6ea" stroke-width="3"/></svg></button>
      <i class="flex h-6 w-2 justify-center"><b class="w-px bg-[#d3e0ef]"></b></i>
      <button aria-label="监听器" class="flex w-6 justify-center"><svg width="16" height="16" fill="none"><path d="M1.500 12V8a6.500 7 0 0113 0v4" stroke="#1c1c1c"/><rect x="2" y="9" width="3" height="7" rx="1" fill="#1c1c1c"/><rect x="11" y="9" width="3" height="7" rx="1" fill="#1c1c1c"/></svg></button>
      <i class="flex h-6 w-2 justify-center"><b class="w-px bg-[#d3e0ef]"></b></i>
      <button aria-label="图形视图" class="flex w-6 justify-center"><svg width="16" height="16"><rect width="16" height="16" rx="1" fill="#1c1c1c"/><path d="M4 8l8-4M4 8l8 4" stroke="#c5d6ea"/><g fill="#c5d6ea"><circle cx="4" cy="8" r="2.500"/><circle cx="12" cy="4" r="2.200"/><circle cx="12" cy="12" r="2.200"/></g></svg></button>
      <button aria-label="列表视图" class="flex w-6 justify-center"><svg width="16" height="16"><path d="M0 2h16M0 8h16M0 14h16" stroke="#1c1c1c" stroke-width="2"/></svg></button>
      <button aria-label="目标视图" class="flex w-6 justify-center"><svg width="16" height="16"><path d="M8 0v16M0 8h16" stroke="#1c1c1c" stroke-width="1.500"/><circle cx="8" cy="8" r="5" fill="none" stroke="#1c1c1c" stroke-width="1.500"/></svg></button>
      <i class="flex h-6 w-2 justify-center"><b class="w-px bg-[#d3e0ef]"></b></i>
      <button aria-label="凭据" class="flex w-6 justify-center"><svg width="16" height="16"><rect y="2" width="16" height="12" rx="1" fill="#1c1c1c"/><g fill="#c5d6ea"><circle cx="5" cy="7" r="1.500"/><path d="M2 12V9.500h6V12zM10 6h4v2h-4zM6 2h4v1H6z"/></g></svg></button>
      <button aria-label="下载" class="flex w-6 justify-center"><svg width="16" height="16"><path d="M6 0h4v6h4l-6 6-6-6h4z" fill="#1c1c1c"/><path d="M1 11v2q0 2 2 2h10q2 0 2-2v-2" fill="none" stroke="#1c1c1c" stroke-width="2"/></svg></button>
      <button aria-label="键盘记录" class="flex w-6 justify-center"><svg width="16" height="16"><circle cx="10.500" cy="5.500" r="5.500" fill="#1c1c1c"/><circle cx="12" cy="4" r="1.500" fill="#b3c8e0"/><path d="M8 8l-7 7M2 13l2 2" stroke="#1c1c1c" stroke-width="3"/></svg></button>
      <button aria-label="屏幕截图" class="flex w-6 justify-center"><svg width="16" height="16"><rect x=".8" y=".8" width="14.500" height="14" fill="none" stroke="#1c1c1c" stroke-width="1.500"/><path d="M3 13V9l2-1 3 3 3-5 2 3v4z" fill="#1c1c1c"/><circle cx="5" cy="5" r="1.500" fill="#1c1c1c"/></svg></button>
      <i class="flex h-6 w-2 justify-center"><b class="w-px bg-[#d3e0ef]"></b></i>
      <button aria-label="设置" class="flex w-6 justify-center"><svg width="17" height="17" viewBox="0 0 16 16"><circle cx="8" cy="8" r="6.800" fill="none" stroke="#1c1c1c" stroke-width="2.500" stroke-dasharray="2.700 2.640"/><circle cx="8" cy="8" r="4.700" fill="none" stroke="#1c1c1c" stroke-width="2.400"/><circle cx="8" cy="8" r="1.600" fill="none" stroke="#1c1c1c"/></svg></button>
      <button aria-label="脚本" class="flex w-6 justify-center"><svg width="16" height="16"><path d="M1 6h11v6q0 3-3 3H4q-3 0-3-3z" fill="#1c1c1c"/><path d="M12 7h2.500v5H11M5 5q0-2 2-2T8 0" fill="none" stroke="#1c1c1c" stroke-width="1.500"/></svg></button>
      <button aria-label="文档" class="flex w-6 justify-center"><svg width="12" height="16"><path d="M0 0h7v5h5v11H0zM8 0l4 4H8z" fill="#1c1c1c"/><path d="M2 7.500h8M2 10.500h8M2 13.500h8" stroke="#b3c8e0"/></svg></button>
      <button aria-label="终端" class="flex w-6 justify-center"><svg width="16" height="16"><path d="M.5.5h15v15H.5z" fill="none" stroke="#1c1c1c"/><path d="M0 2h16M4 6l3 2.500L4 11M8 12h4" fill="none" stroke="#1c1c1c" stroke-width="1.500"/></svg></button>
      <i class="flex h-6 w-2 justify-center"><b class="w-px bg-[#d3e0ef]"></b></i>
      <button aria-label="链接" class="flex w-6 justify-center"><svg width="16" height="16" fill="none" stroke="#1c1c1c" stroke-width="2"><rect x="6.500" y="2.500" width="9" height="5.500" rx="2.700" transform="rotate(-45 11 5)"/><rect x=".5" y="8" width="9" height="5.500" rx="2.700" transform="rotate(-45 5 11)"/></svg></button>
      <button aria-label="云" class="flex w-6 justify-center"><svg width="16" height="16"><path d="M1 14q-2-3 1-6 1-2 3-2 3-5 6-1 1 1 1 3 5 1 4 6z" fill="#1c1c1c"/></svg></button>
      <i class="flex h-6 w-2 justify-center"><b class="w-px bg-[#d3e0ef]"></b></i>
      <button aria-label="手册" class="flex w-6 justify-center"><svg width="12" height="16"><path d="M2 0h10v16H2q-2 0-2-2V2q0-2 2-2z" fill="#1c1c1c"/><path d="M2 13.500h9" stroke="#b3c8e0"/></svg></button>
      <button aria-label="关于" class="flex w-6 justify-center"><svg width="16" height="16"><path d="M8 0l7.500 3.500v9L8 16 .5 12.500v-9z" fill="#1c1c1c"/><path d="M1 4l7 3.500L15 4M8 7.500V16" stroke="#b3c8e0" fill="none"/></svg></button>
    </div>
  </div>

  <div class="min-h-0 flex-1 border-y border-[#3a3a3a] bg-[linear-gradient(to_right,#e3e6ef,#eff2fb_8px)]">
    <table class="w-full table-fixed text-left text-[14px]">
      <colgroup><col class="w-[31px]"><col class="w-[91px]"><col class="w-[91px]"><col class="w-[91px]"><col class="w-[91px]"><col class="w-[91px]"><col class="w-[91px]"><col class="w-[90px]"><col class="w-[96px]"><col class="w-[96px]"><col></colgroup>
      <thead class="bg-linear-to-b from-[#fbfcff] via-[#e9f1fa] to-[#d3e0ee]">
        <tr class="h-[23px] border-b border-[#99b4d1] *:border-r *:border-[#99b4d1] *:pt-[2px] *:pb-0 *:pl-1 *:leading-5 *:font-normal">
          <th></th><th>external</th>
          <th class="bg-linear-to-b from-white to-[#eff4fa]"><span class="flex items-center gap-2">internal<svg width="8" height="4"><path d="M0 4h8L4 0z" fill="#555"/></svg></span></th>
          <th>listener</th><th>user</th><th>computer</th><th>note</th><th>process</th><th>pid</th><th>arch</th><th>last</th>
        </tr>
      </thead>
      <tbody>
        <tr class="h-[23px] bg-[#f7f7f9] *:truncate *:border-r *:border-transparent *:pt-[2px] *:pb-0 *:pl-1 *:leading-[21px]">
          <td><svg class="ml-px" width="20" height="16"><path d="M.5 1.500l19-1v12l-8 .5v2H8v-2l-7.500-.5z" fill="#e78a92" stroke="#d8606b"/><path d="M2 3l16-1v9H2z" fill="#2f6fae"/><path d="M8 5l2-1v3L8 8z" fill="#e9622b"/><path d="M11 4l3 1v3l-3-1z" fill="#7fc04c"/><path d="M8 8l2-1v3z" fill="#3ea0e8"/><path d="M11 8l3 1-1 1z" fill="#f8c832"/></svg></td>
          <td>10.0.0.133</td><td>10.0.0.133</td><td>test</td><td>Administrator *</td><td>OUYANG-SERVER</td><td></td><td>rundll32.exe</td><td>3436</td><td>x86</td><td>7s</td>
        </tr>
      </tbody>
    </table>
  </div>

  <div class="flex h-[10px] shrink-0 items-center gap-[10px] px-2 pb-[3px]">
    <div class="flex flex-1 gap-[10px]">
      <svg width="6" height="3"><path d="M0 3h6L3 0z" fill="#333"/></svg>
      <svg width="6" height="3"><path d="M0 0h6L3 3z" fill="#333"/></svg>
    </div>
    <svg width="19" height="4"><path d="M0 .5h19" stroke="#8a93a8" stroke-dasharray="2 3"/><path d="M2 2.500h17" stroke="#8a93a8" stroke-dasharray="2 3"/></svg>
    <div class="flex-1"></div>
  </div>
  <nav class="flex h-7 shrink-0 items-stretch text-[14px] font-['Liberation_Sans','Noto_Sans_CJK_SC',sans-serif] shadow-[inset_0_-1px_0_#2f4f70]">
    <div class="ml-[2px] flex w-[58px] items-center justify-center rounded-t-[2px] border border-[#2f4f70] bg-[#c9daea] pt-px font-light"><a href="#" class="text-[#4a3cff]">日志</a><button class="font-normal">X</button></div>
    <div class="flex w-[71px] items-center justify-center rounded-t-[2px] border border-b-0 border-[#2f4f70] bg-[#eff2fb] font-light"><a href="#" class="text-[#444]">监听器</a><button class="font-normal">X</button></div>
  </nav>
  <div class="ml-[2px] flex h-[34px] shrink-0 border-l border-[#2f4f70] pt-[2px] pl-[1px]">
    <div class="min-w-0 flex-1 border-t border-l border-[#3a3a3a] bg-[#5b7896]">
      <table class="w-full table-fixed text-left text-[14px]">
        <colgroup><col class="w-[118px]"><col class="w-[237px]"><col class="w-[119px]"><col class="w-[58px]"><col class="w-[57px]"><col class="w-[237px]"><col></colgroup>
        <thead class="bg-linear-to-b from-[#fbfcff] via-[#e9f1fa] to-[#d3e0ee]">
          <tr class="h-[23px] border-b border-[#99b4d1] *:border-r *:border-[#99b4d1] *:pt-[2px] *:pb-0 *:pl-1 *:leading-5 *:font-normal">
            <th class="bg-linear-to-b from-white to-[#eff4fa]"><span class="flex items-center gap-2">name<svg width="8" height="4"><path d="M0 4h8L4 0z" fill="#555"/></svg></span></th>
            <th>payload</th><th>host</th><th>port</th><th>bindto</th><th>beacons</th><th>profile</th>
          </tr>
        </thead>
      </table>
    </div>
  </div>

  <svg class="absolute top-[71px] left-[98px]" width="117" height="78" viewBox="762 70 117 78"><path d="M763 72l18 3-2 5 40 22 58 43-66-39-35-22-4 4z" fill="#fc3838"/></svg>
  <div class="absolute top-[167px] left-[200px] flex items-center text-white">
    <span class="mb-[2px] flex size-[26px] items-center justify-center rounded-full bg-[#fc3838] pb-[3px] font-['Noto_Sans_CJK_SC',sans-serif] text-[16px] leading-5">2</span>
    <svg class="ml-[6px]" width="5" height="12"><path d="M5 0v12L0 6z" fill="#636466"/></svg>
    <span class="flex h-[47px] items-center rounded-[3px] bg-[#636466] pr-4 pb-px pl-2 font-['Noto_Sans_CJK_SC',sans-serif] text-[23px] whitespace-nowrap">木马自动上线</span>
  </div>
</section>

<div class="absolute top-[376px] left-[240px] flex items-center text-white">
  <span class="mb-[2px] flex size-[26px] items-center justify-center rounded-full bg-[#fc3838] pb-[3px] font-['Noto_Sans_CJK_SC',sans-serif] text-[16px] leading-5">1</span>
  <svg class="ml-[6px]" width="5" height="12"><path d="M5 0v12L0 6z" fill="#666"/></svg>
  <span class="flex h-[47px] items-center rounded-[3px] bg-[#666] pr-4 pb-px pl-2 font-['Noto_Sans_CJK_SC',sans-serif] text-[23px] whitespace-nowrap">打开文档</span>
</div>
</body>
</html>
